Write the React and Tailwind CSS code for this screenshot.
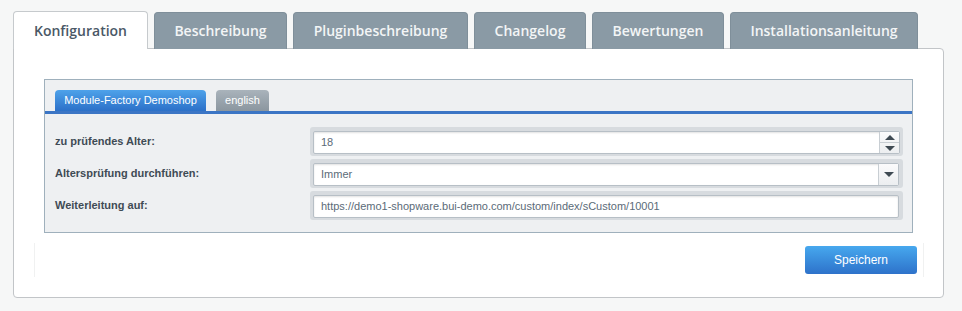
import React from "react";

const outerTabs = [
  { label: "Beschreibung", w: "w-[133px]" },
  { label: "Pluginbeschreibung", w: "w-[175px]" },
  { label: "Changelog", w: "w-[112px]" },
  { label: "Bewertungen", w: "w-[132px]" },
  { label: "Installationsanleitung", w: "w-[188px]" },
];

const frame = "w-[593px] h-[29px] rounded-[3px] bg-[#d7dbdf] pl-[3px] pr-[4px] pt-[4px] pb-[2px]";
const inner = "h-full flex bg-white border border-[#b7bfc6] rounded-[2px] shadow-[inset_0_1px_2px_rgba(0,0,0,0.12)]";

export default function App() {
  return (
    <div className="w-[962px] h-[311px] bg-[#f6f7f7] pt-[11px] pl-[13px] font-['Liberation_Sans',Arial,sans-serif]">
      {/* outer tabs */}
      <div className="flex gap-[6px] h-[38px] relative z-10 font-['Open_Sans',sans-serif] text-[14px] font-semibold">
        <div className="w-[135px] h-[38px] bg-white border border-[#c6cacd] border-b-0 rounded-t-[4px] flex items-center justify-center text-[#4a5866] pb-[1px]">
          Konfiguration
        </div>
        {outerTabs.map((t) => (
          <div
            key={t.label}
            className={`${t.w} h-[37px] mt-[1px] bg-[#8a9aa5] border border-[#7f8f9a] border-b-0 rounded-t-[4px] flex items-center justify-center text-[#f3f5f6] pb-[2px]`}
          >
            {t.label}
          </div>
        ))}
      </div>
      {/* panel */}
      <div className="w-[931px] h-[250px] -mt-px bg-white border border-[#c2c5c8] rounded-b-[4px] rounded-tr-[4px] pt-[30px] px-[30px]">
        <div className="w-[869px] h-[154px] border border-[#9fb0bc] bg-[#eef0f2]">
          {/* inner tabs */}
          <div className="h-[34px] flex items-end gap-[10px] pl-[10px] border-b-[3px] border-[#3b75c5] text-[11px]">
            <div className="w-[151px] h-[21px] rounded-t-[4px] bg-gradient-to-b from-[#4ea2ea] to-[#2c70c8] text-white flex items-center justify-center">
              Module-Factory Demoshop
            </div>
            <div className="w-[53px] h-[21px] rounded-t-[4px] bg-gradient-to-b from-[#a9b3bb] to-[#8b969f] text-white flex items-center justify-center">
              english
            </div>
          </div>
          {/* rows */}
          <div className="pt-[13px] pl-[10px] flex flex-col gap-[3px] text-[11px]">
            <div className="flex items-center">
              <div className="w-[255px] font-bold text-[#3f4b55]">zu prüfendes Alter:</div>
              <div className="w-[593px] h-[29px] rounded-[3px] bg-[#d7dbdf] pl-[3px] pr-[3px] pt-[4px] pb-[2px]">
                <div className={inner}>
                  <div className="flex-1 flex items-center pl-[7px] text-[#5b6b78]">18</div>
                  <div className="w-[20px] flex flex-col border-l border-[#c8ced3] bg-gradient-to-b from-[#fbfbfc] to-[#eceef0]">
                    <div className="flex-1 flex items-center justify-center border-b border-[#c8ced3]">
                      <div className="w-0 h-0 border-l-[5px] border-r-[5px] border-b-[5px] border-l-transparent border-r-transparent border-b-[#3f4a53]" />
                    </div>
                    <div className="flex-1 flex items-center justify-center">
                      <div className="w-0 h-0 border-l-[5px] border-r-[5px] border-t-[5px] border-l-transparent border-r-transparent border-t-[#3f4a53]" />
                    </div>
                  </div>
                </div>
              </div>
            </div>
            <div className="flex items-center">
              <div className="w-[255px] font-bold text-[#3f4b55]">Altersprüfung durchführen:</div>
              <div className={frame}>
                <div className={inner}>
                  <div className="flex-1 flex items-center pl-[7px] text-[#5b6b78]">Immer</div>
                  <div className="w-[20px] flex items-center justify-center border-l border-[#c8ced3] bg-gradient-to-b from-[#fbfbfc] to-[#eceef0]">
                    <div className="w-0 h-0 border-l-[5px] border-r-[5px] border-t-[5px] border-l-transparent border-r-transparent border-t-[#3f4a53]" />
                  </div>
                </div>
              </div>
            </div>
            <div className="flex items-center">
              <div className="w-[255px] font-bold text-[#3f4b55]">Weiterleitung auf:</div>
              <div className={frame}>
                <div className={`${inner} items-center pl-[7px] text-[#5b6b78]`}>
                  https://demo1-shopware.bui-demo.com/custom/index/sCustom/10001
                </div>
              </div>
            </div>
          </div>
        </div>
        {/* toolbar */}
        <div className="-ml-[10px] mt-[10px] w-[890px] h-[34px] border-l border-r border-[#f0f1f1] flex items-center justify-end pr-[6px]">
          <button className="w-[112px] h-[28px] rounded-[3px] bg-gradient-to-b from-[#47a8ee] to-[#2e72ca] text-white text-[12px] flex items-center justify-center">
            Speichern
          </button>
        </div>
      </div>
    </div>
  );
}
